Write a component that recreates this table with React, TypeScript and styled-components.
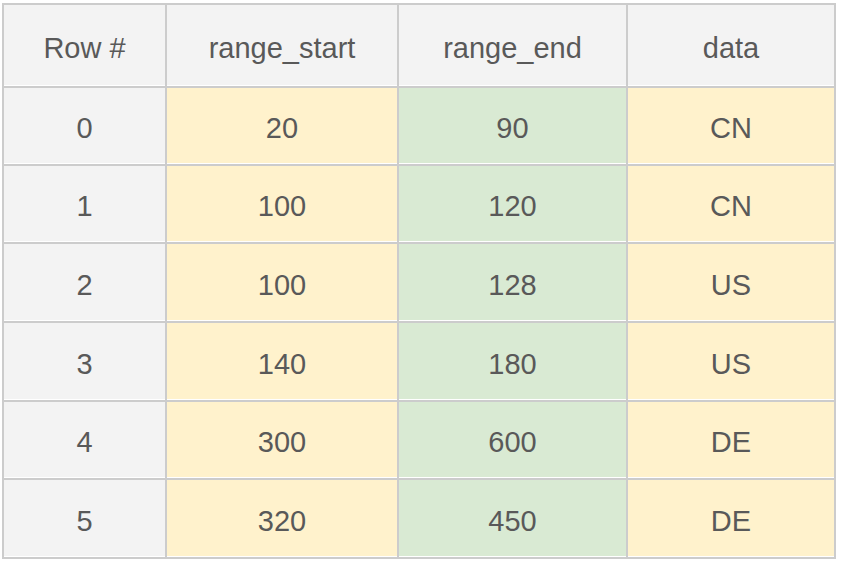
import React from "react";
import styled, { createGlobalStyle } from "styled-components";

const Global = createGlobalStyle`
  html, body { margin: 0; padding: 0; background: #ffffff; }
  body { font-family: "Liberation Sans", Arial, sans-serif; }
`;

const Grid = styled.div`
  display: grid;
  grid-template-columns: 161px 230px 227px 206px;
  grid-template-rows: 81px 76px 76px 77px 77px 76px 77px;
  gap: 2px;
  padding: 2px;
  background: #cccccc;
  width: max-content;
  margin: 3px 0 0 2px;
`;

type Tone = "head" | "yellow" | "green";

const toneBg: Record<Tone, string> = {
  head: "#f3f3f3",
  yellow: "#fff2cc",
  green: "#d9ead3",
};

const Cell = styled.div<{ $tone: Tone }>`
  display: flex;
  align-items: center;
  justify-content: center;
  background: ${(p) => toneBg[p.$tone]};
  box-shadow: inset 0 -1px 0 #ffffff;
  color: #595959;
  font-size: 29px;
  line-height: 1;
  padding-top: 5px;
`;

const headers = ["Row #", "range_start", "range_end", "data"];
const rows: [number, number, number, string][] = [
  [0, 20, 90, "CN"],
  [1, 100, 120, "CN"],
  [2, 100, 128, "US"],
  [3, 140, 180, "US"],
  [4, 300, 600, "DE"],
  [5, 320, 450, "DE"],
];

export default function App() {
  return (
    <>
      <Global />
      <Grid>
        {headers.map((h) => (
          <Cell key={h} $tone="head">
            {h}
          </Cell>
        ))}
        {rows.map(([i, s, e, d]) => (
          <React.Fragment key={i}>
            <Cell $tone="head">{i}</Cell>
            <Cell $tone="yellow">{s}</Cell>
            <Cell $tone="green">{e}</Cell>
            <Cell $tone="yellow">{d}</Cell>
          </React.Fragment>
        ))}
      </Grid>
    </>
  );
}
